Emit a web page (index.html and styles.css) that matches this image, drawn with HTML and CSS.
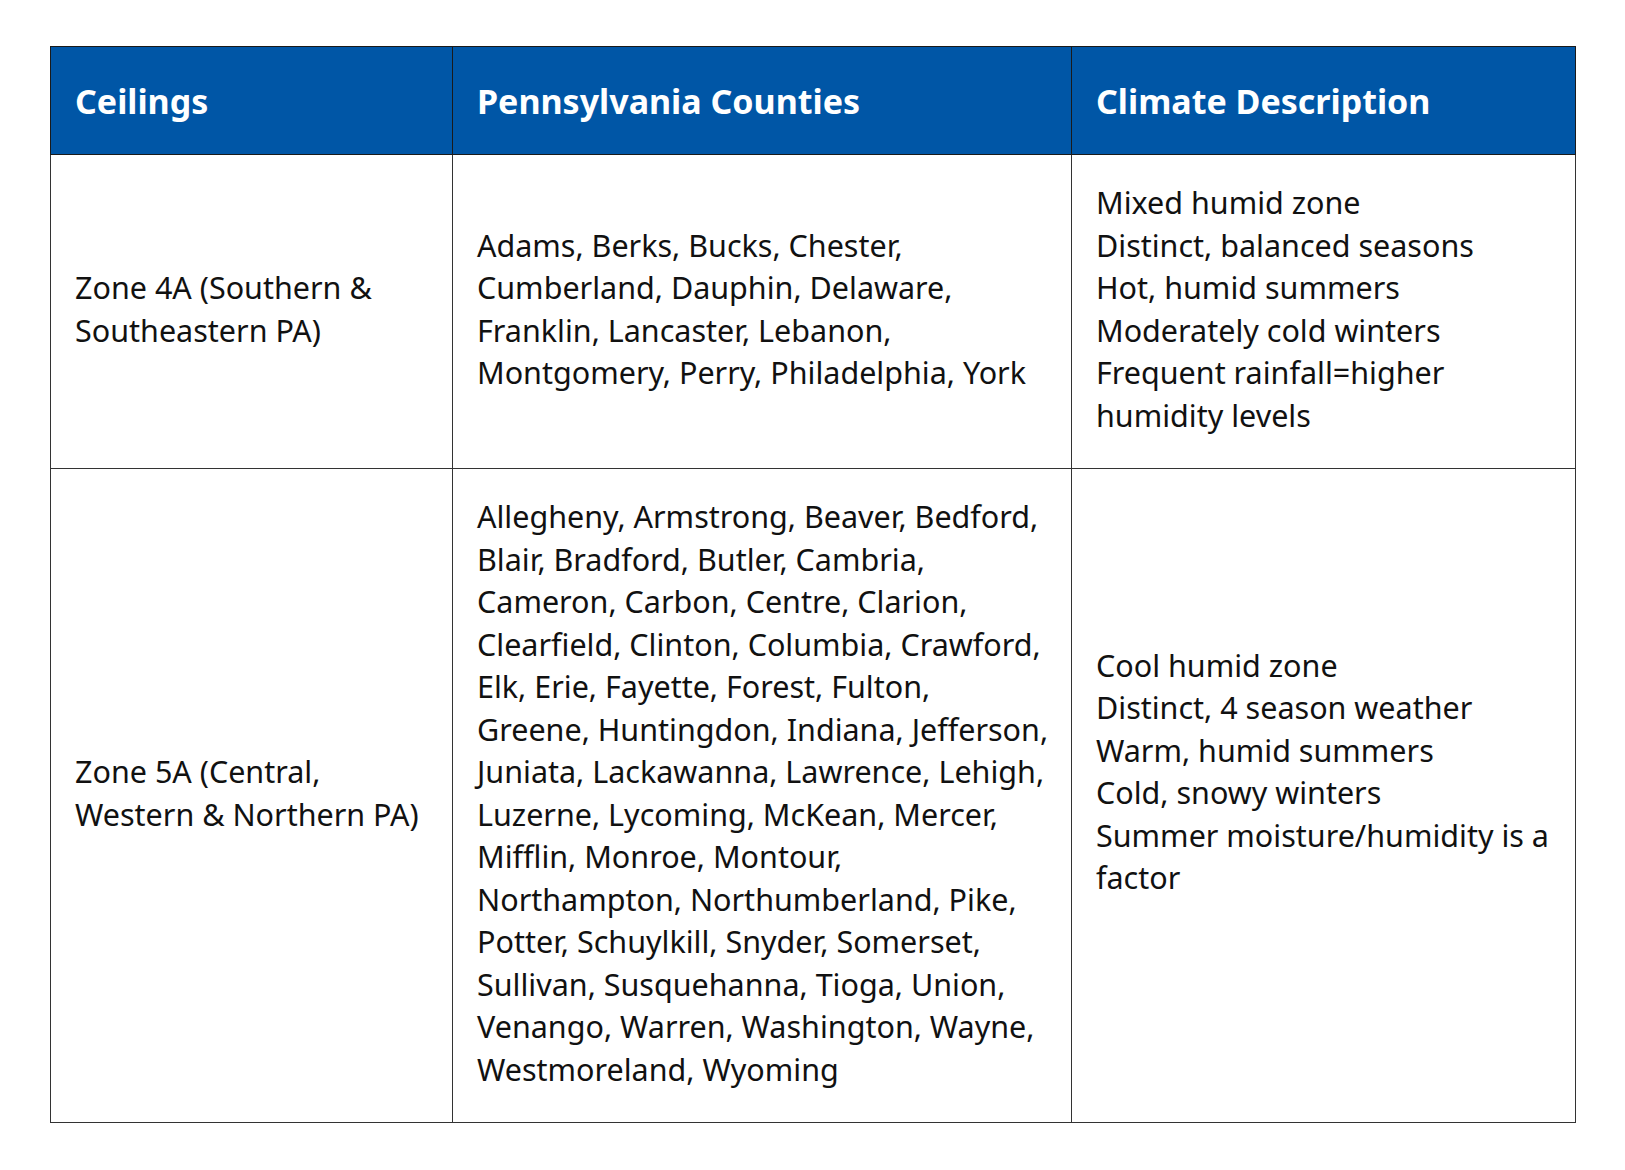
FILE: index.html
```html
<!DOCTYPE html>
<html lang="en">
<head>
<meta charset="utf-8">
<title>Pennsylvania Climate Zones</title>
<link rel="stylesheet" href="styles.css">
</head>
<body>
<table class="zones">
  <colgroup>
    <col class="c1">
    <col class="c2">
    <col class="c3">
  </colgroup>
  <thead>
    <tr>
      <th>Ceilings</th>
      <th>Pennsylvania Counties</th>
      <th>Climate Description</th>
    </tr>
  </thead>
  <tbody>
    <tr>
      <td>Zone 4A (Southern &amp; Southeastern PA)</td>
      <td>Adams, Berks, Bucks, Chester, Cumberland, Dauphin, Delaware, Franklin, Lancaster, Lebanon, Montgomery, Perry, Philadelphia, York</td>
      <td>Mixed humid zone<br>Distinct, balanced seasons<br>Hot, humid summers<br>Moderately cold winters<br>Frequent rainfall=higher humidity levels</td>
    </tr>
    <tr>
      <td>Zone 5A (Central, Western &amp; Northern PA)</td>
      <td class="lines">Allegheny, Armstrong, Beaver, Bedford,<br>Blair, Bradford, Butler, Cambria,<br>Cameron, Carbon, Centre, Clarion,<br>Clearfield, Clinton, Columbia, Crawford,<br>Elk, Erie, Fayette, Forest, Fulton,<br>Greene, Huntingdon, Indiana, Jefferson,<br>Juniata, Lackawanna, Lawrence, Lehigh,<br>Luzerne, Lycoming, McKean, Mercer,<br>Mifflin, Monroe, Montour,<br>Northampton, Northumberland, Pike,<br>Potter, Schuylkill, Snyder, Somerset,<br>Sullivan, Susquehanna, Tioga, Union,<br>Venango, Warren, Washington, Wayne,<br>Westmoreland, Wyoming</td>
      <td>Cool humid zone<br>Distinct, 4 season weather<br>Warm, humid summers<br>Cold, snowy winters<br>Summer moisture/humidity is a factor<br><br></td>
    </tr>
  </tbody>
</table>
</body>
</html>
```
FILE: styles.css
```css
html, body {
  margin: 0;
  padding: 0;
  background: #ffffff;
}

body {
  padding: 46px 0 0 50px;
  font-family: "Noto Sans", "Open Sans", sans-serif;
  color: #111111;
}

.zones {
  width: 1525px;
  border-collapse: collapse;
  table-layout: fixed;
  border: 1px solid #4a4a4a;
}

.c1 { width: 402px; }
.c2 { width: 619px; }
.c3 { width: 504px; }

.zones th {
  background: #0056a6;
  color: #ffffff;
  font-size: 34px;
  font-weight: 700;
  text-align: left;
  height: 107px;
  padding: 0 24px;
  border: 1px solid #1a1a1a;
  vertical-align: middle;
}

.zones td {
  font-size: 30.5px;
  line-height: 42.5px;
  padding: 26px 24px 32px;
  border: 1px solid #333333;
  vertical-align: middle;
}

.zones td.lines {
  white-space: nowrap;
}
```
